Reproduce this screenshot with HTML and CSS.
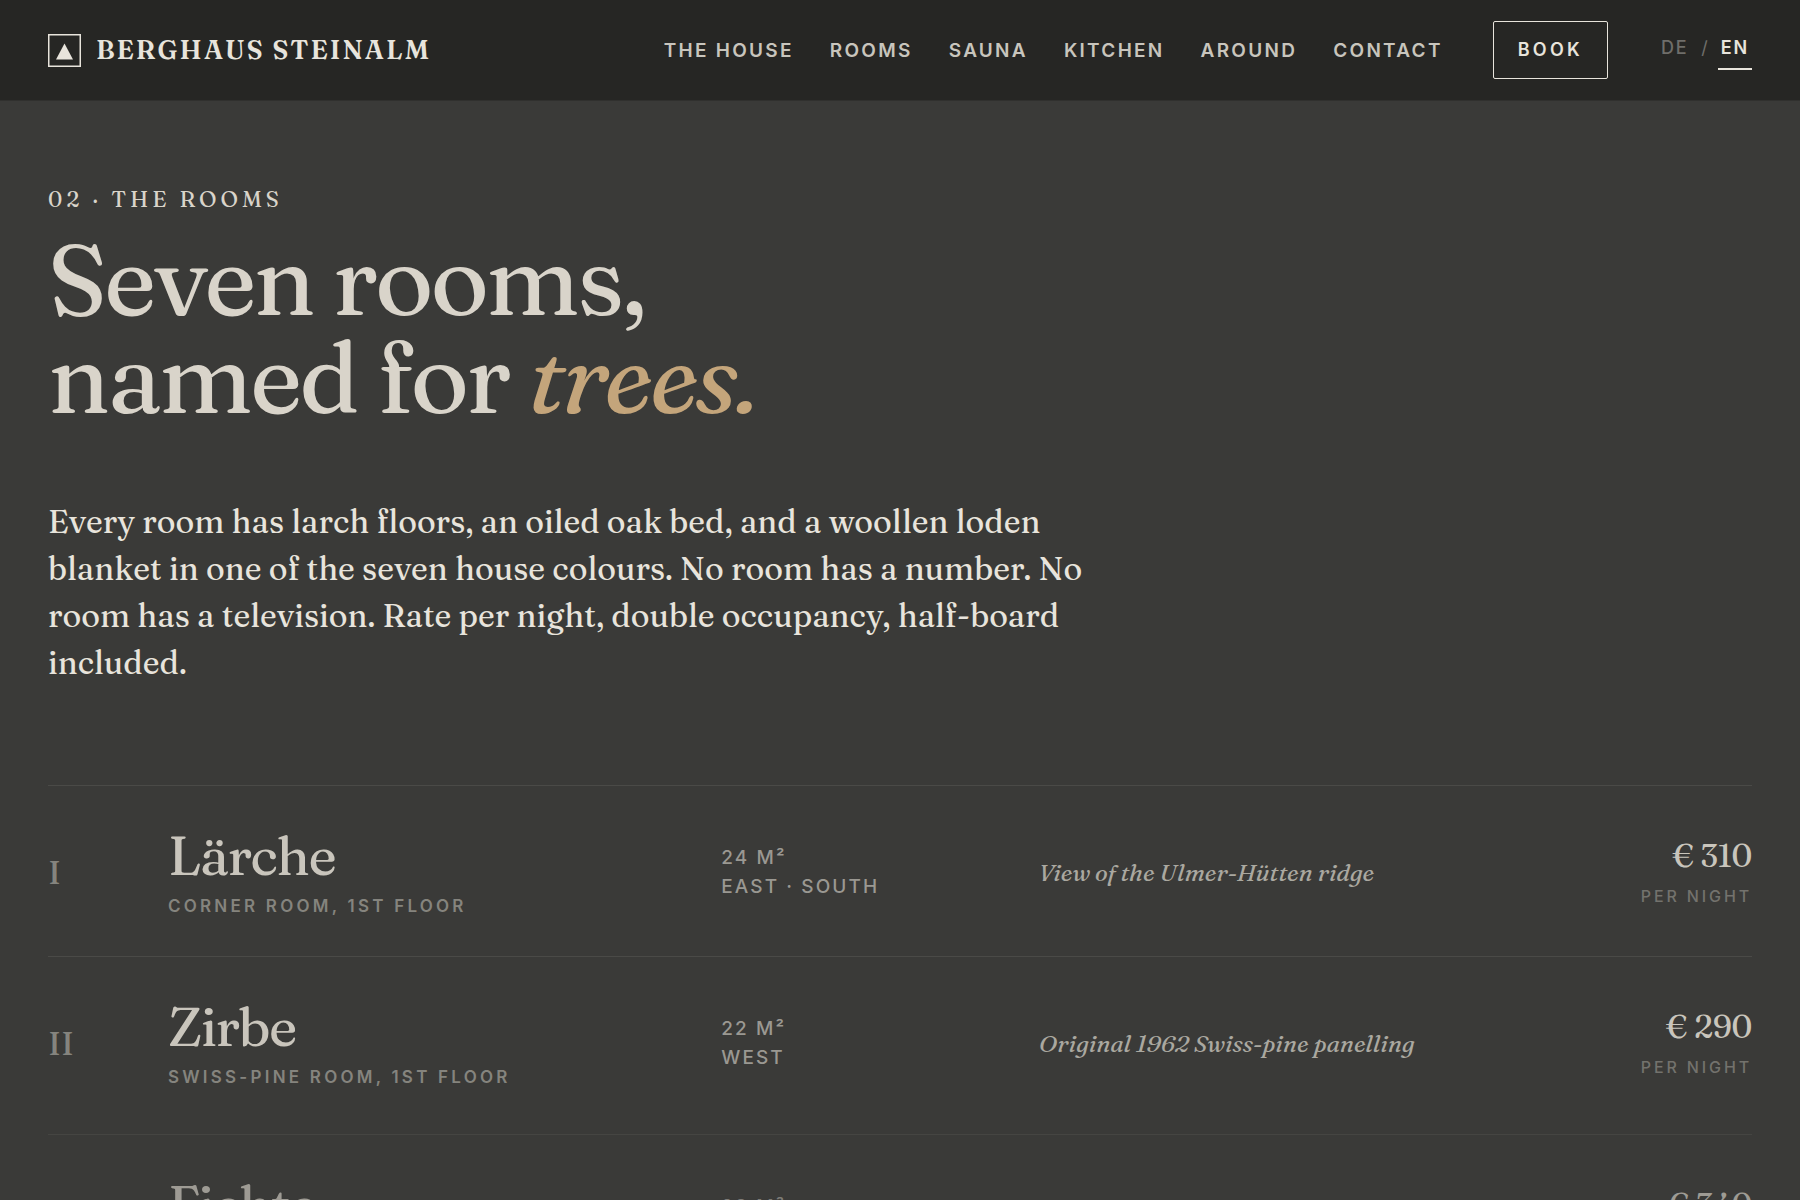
FILE: index.html
```html
<!DOCTYPE html>
<html lang="en">
<head>
  <meta charset="UTF-8" />
  <meta name="viewport" content="width=device-width, initial-scale=1.0"/>
  <title>Rooms | Berghaus Steinalm</title>
  <link rel="stylesheet" href="styles.css">
</head>
<body>

  <!-- Header -->
  <header class="site-header">
    <a href="#" class="brand">
      <svg class="brand-mark" viewBox="0 0 33 33" aria-hidden="true">
        <rect x="0.75" y="0.75" width="31.5" height="31.5" fill="none" stroke="currentColor" stroke-width="1.5"/>
        <path d="M16.5 9.5 L25 25.5 H8 Z" fill="currentColor"/>
      </svg>
      <span>BERGHAUS STEINALM</span>
    </a>
    <div class="header-right">
      <nav class="nav-links">
        <a href="#house">THE HOUSE</a>
        <a href="#rooms">ROOMS</a>
        <a href="#sauna">SAUNA</a>
        <a href="#kitchen">KITCHEN</a>
        <a href="#around">AROUND</a>
        <a href="#contact">CONTACT</a>
      </nav>
      <a href="#book" class="book">BOOK</a>
      <div class="lang">
        <button type="button">DE</button>
        <span>/</span>
        <button type="button" class="active">EN</button>
      </div>
    </div>
  </header>

  <!-- Rooms -->
  <main class="rooms" id="rooms">
    <p class="eyebrow">02 · THE ROOMS</p>
    <h1>Seven rooms,<br>named for <em>trees.</em></h1>
    <p class="lead">Every room has larch floors, an oiled oak bed, and a woollen loden blanket in one of the seven house colours. No room has a number. No room has a television. Rate per night, double occupancy, half-board included.</p>

    <div class="room-list">
      <article class="room">
        <span class="room-num">I</span>
        <div>
          <h2>Lärche</h2>
          <p class="room-type">CORNER ROOM, 1ST FLOOR</p>
        </div>
        <p class="room-meta">24 M²<br>EAST · SOUTH</p>
        <p class="room-note">View of the Ulmer-Hütten ridge</p>
        <div class="room-rate">
          <p class="price">€ 310</p>
          <p class="per">PER NIGHT</p>
        </div>
      </article>

      <article class="room">
        <span class="room-num">II</span>
        <div>
          <h2>Zirbe</h2>
          <p class="room-type">SWISS-PINE ROOM, 1ST FLOOR</p>
        </div>
        <p class="room-meta">22 M²<br>WEST</p>
        <p class="room-note">Original 1962 Swiss-pine panelling</p>
        <div class="room-rate">
          <p class="price">€ 290</p>
          <p class="per">PER NIGHT</p>
        </div>
      </article>

      <article class="room entering">
        <span class="room-num">III</span>
        <div>
          <h2>Fichte</h2>
          <p class="room-type">ROOM, 1ST FLOOR</p>
        </div>
        <p class="room-meta">28 M²<br>SOUTH</p>
        <p class="room-note"></p>
        <div class="room-rate">
          <p class="price">€ 340</p>
          <p class="per">PER NIGHT</p>
        </div>
      </article>
    </div>
  </main>

</body>
</html>
```
FILE: styles.css
```css
* {
  box-sizing: border-box;
  margin: 0;
  padding: 0;
}

html {
  height: 100%;
}

body {
  height: 100%;
  display: flex;
  flex-direction: column;
  overflow: hidden;
  background-color: #3a3a38;
  color: #e8e4dc;
  font-family: Inter, sans-serif;
}

h1, h2, .brand, .eyebrow, .lead, .room-num, .room-note, .price {
  font-family: Fraunces, "Liberation Serif", serif;
  font-weight: 500;
}

a {
  color: inherit;
  text-decoration: none;
}

/* Header */
.site-header {
  flex: none;
  display: flex;
  justify-content: space-between;
  align-items: center;
  padding: 21px 48px;
  background-color: #262624;
  border-bottom: 1px solid #30302e;
}

.brand {
  display: flex;
  align-items: center;
  gap: 15px;
  font-size: 26px;
  font-weight: 600;
  letter-spacing: 0.08em;
}

.brand-mark {
  width: 33px;
  height: 33px;
}

.header-right {
  display: flex;
  align-items: center;
  gap: 50px;
}

.nav-links {
  display: flex;
  gap: 36px;
  font-size: 19px;
  font-weight: 600;
  letter-spacing: 0.12em;
  color: #c8c5bd;
}

.book {
  padding: 0 24px;
  border: 1px solid #e8e4dc;
  border-radius: 2px;
  font-size: 18px;
  font-weight: 600;
  line-height: 56px;
  letter-spacing: 0.18em;
}

.lang {
  display: flex;
  align-items: baseline;
  gap: 10px;
  font-size: 18px;
  color: #6f6e6a;
}

.lang button {
  padding: 6px 3px 10px;
  background: none;
  border: none;
  border-bottom: 2px solid transparent;
  font: inherit;
  font-weight: 500;
  letter-spacing: 0.1em;
  color: inherit;
  cursor: pointer;
}

.lang .active {
  border-bottom-color: #e8e4dc;
  font-weight: 600;
  color: #e8e4dc;
}

/* Intro */
.rooms {
  padding: 83px 48px 0;
}

.eyebrow {
  font-size: 22px;
  line-height: 30px;
  letter-spacing: 0.18em;
  color: #d9d4ca;
}

h1 {
  margin-top: 16px;
  font-size: 100px;
  line-height: 98px;
  letter-spacing: -0.03em;
  color: #d9d4ca;
}

h1 em {
  color: #c4a57b;
}

.lead {
  max-width: 1060px;
  margin-top: 72px;
  font-size: 32px;
  line-height: 47px;
}

/* Room list */
.room-list {
  margin-top: 99px;
}

.room {
  display: grid;
  grid-template-columns: 80px 1.85fr 1fr 1.85fr 160px;
  gap: 40px;
  align-items: center;
  padding: 40px 0 38px;
  border-top: 1px solid #4a4a47;
}

.room-num {
  font-size: 34px;
  font-weight: 400;
  color: #85847e;
}

.room h2 {
  font-size: 54px;
  line-height: 60px;
  letter-spacing: -0.03em;
  color: #c9c5bc;
}

.room-type {
  margin-top: 8px;
  font-size: 17px;
  font-weight: 600;
  line-height: 24px;
  letter-spacing: 0.19em;
  color: #85847e;
}

.room-meta {
  font-size: 19px;
  font-weight: 500;
  line-height: 29px;
  letter-spacing: 0.11em;
  color: #9a9892;
}

.room-note {
  font-size: 24px;
  font-style: italic;
  color: #aaa8a0;
}

.room-rate {
  text-align: right;
}

.price {
  font-size: 32px;
  line-height: 40px;
  letter-spacing: -0.01em;
  color: #c9c5bc;
}

.per {
  margin-top: 8px;
  font-size: 16px;
  font-weight: 500;
  line-height: 24px;
  letter-spacing: 0.18em;
  color: #73726d;
}

.entering {
  margin-top: 7px;
  opacity: 0.7;
}
```
